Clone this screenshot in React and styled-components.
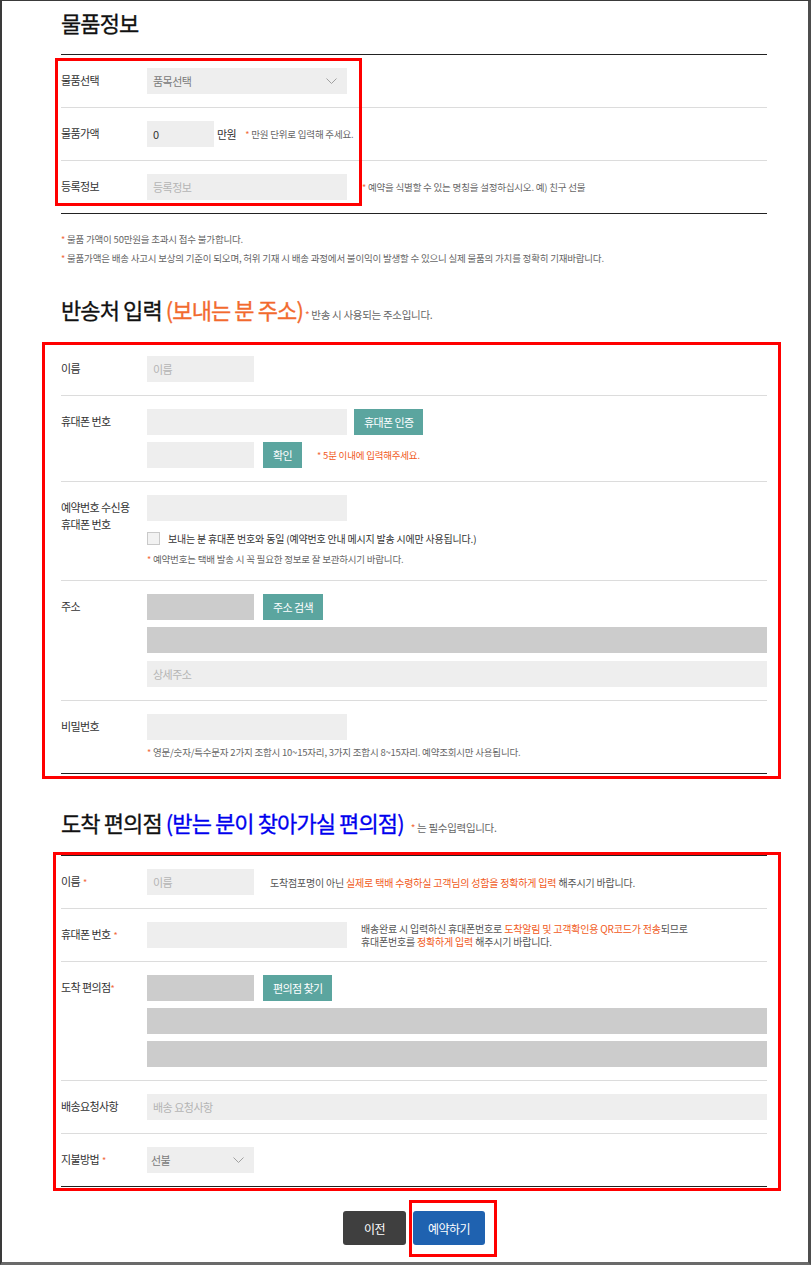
import React from 'react';
import styled, { createGlobalStyle } from 'styled-components';

const FONT = `"Noto Sans CJK KR", "Noto Sans", sans-serif`;

const GlobalStyle = createGlobalStyle`
  html, body { margin: 0; padding: 0; background: #fff; }
  body { font-family: ${FONT}; color: #222; }
  *, *::before, *::after { box-sizing: border-box; }
`;

const Frame = styled.div`
  width: 811px;
  height: 1265px;
  border-top: 1px solid #3a3a3a;
  border-left: 2px solid #3a3a3a;
  border-right: 3px solid #4d4d4d;
  border-bottom: 3px solid #6a6a6a;
  padding: 0 41px 0 59px;
  overflow: hidden;
`;

const Title = styled.h2`
  margin: ${(p) => p.$mt}px 0 ${(p) => p.$mb ?? 16}px;
  height: 28px;
  display: flex;
  align-items: baseline;
  font-size: 22px;
  font-weight: 400;
  letter-spacing: -0.9px;
  line-height: 28px;
  color: #111;
  white-space: pre;
  -webkit-text-stroke: 0.3px #111;
`;

const Accent = styled.span`
  color: ${(p) => p.$color};
  -webkit-text-stroke: 0.3px ${(p) => p.$color};
`;

const TitleNote = styled.span`
  margin-left: ${(p) => p.$ml ?? 2}px;
  font-size: 10.5px;
  font-weight: 400;
  line-height: 14px;
  letter-spacing: -0.3px;
  color: #666;
  -webkit-text-stroke: 0;
`;

const Star = styled.span`
  color: #f26a3a;
  font-size: ${(p) => p.$size ?? 9}px;
  margin-right: ${(p) => p.$mr ?? 2}px;
  margin-left: ${(p) => p.$ml ?? 0}px;
  -webkit-text-stroke: 0;
`;

const Table = styled.div`
  position: relative;
  border-top: 1px solid #222;
  border-bottom: 1px solid #222;
`;

const Row = styled.div`
  display: grid;
  grid-template-columns: 86px 1fr;
  padding: 13px 0;
  & + & {
    border-top: 1px solid #dcdcdc;
  }
`;

const Label = styled.div`
  font-size: 11px;
  letter-spacing: -0.6px;
  line-height: 17px;
  padding-top: 4px;
  color: #333;
`;

const Field = styled.div`
  display: flex;
  flex-direction: column;
  align-items: stretch;
  gap: ${(p) => p.$gap ?? 7}px;
`;

const Line = styled.div`
  display: flex;
  align-items: center;
  min-height: ${(p) => p.$h ?? 26}px;
  margin-top: ${(p) => p.$mt ?? 0}px;
`;

const Input = styled.input`
  width: ${(p) => (p.$w ? `${p.$w}px` : '100%')};
  height: 26px;
  flex: none;
  border: 0;
  margin: 0;
  background: #eeeeee;
  padding: 0 6px;
  font-family: ${FONT};
  font-size: 11px;
  letter-spacing: -0.5px;
  color: #333;
  outline: none;
  &::placeholder {
    color: #b4b4b4;
  }
`;

const GrayBar = styled.div`
  width: ${(p) => (p.$w ? `${p.$w}px` : '100%')};
  height: 26px;
  flex: none;
  background: #cccccc;
`;

const TealButton = styled.button`
  height: 26px;
  margin: 0 0 0 ${(p) => p.$ml ?? 7}px;
  padding: 0 ${(p) => p.$px ?? 10}px;
  border: 0;
  background: #5ba59f;
  color: #fff;
  font-family: ${FONT};
  font-size: 11px;
  letter-spacing: -0.6px;
  cursor: pointer;
`;

const Unit = styled.span`
  margin-left: 3px;
  font-size: 11px;
  letter-spacing: -0.5px;
  color: #333;
`;

const Hint = styled.span`
  margin-left: ${(p) => p.$ml ?? 0}px;
  font-size: 9.5px;
  letter-spacing: -0.2px;
  line-height: 14px;
  color: ${(p) => p.$color ?? '#666'};
  white-space: nowrap;
`;

const SideNote = styled.p`
  margin: 0 0 0 ${(p) => p.$ml}px;
  font-size: 10px;
  letter-spacing: -0.2px;
  line-height: 13px;
  color: #555;
  white-space: nowrap;
`;

const Orange = styled.span`
  color: #f15a22;
`;

const SelectBox = styled.div`
  width: ${(p) => p.$w}px;
  height: 26px;
  background: #eeeeee;
  display: flex;
  align-items: center;
  justify-content: space-between;
  padding: 0 10px 0 ${(p) => p.$pl ?? 6}px;
  font-size: 11px;
  letter-spacing: -0.5px;
  color: #7a7a7a;
`;

const Chevron = () => (
  <svg width="11" height="7" viewBox="0 0 11 7" fill="none">
    <polyline points="0.5,0.5 5.5,5.5 10.5,0.5" stroke="#a0a0a0" strokeWidth="1" />
  </svg>
);

const CheckBox = styled.span`
  width: 13px;
  height: 13px;
  flex: none;
  border: 1px solid #c9c9c9;
  background: #f2f2f2;
  margin-right: 8px;
`;

const CheckText = styled.span`
  font-size: 10px;
  letter-spacing: -0.2px;
  color: #333;
  white-space: nowrap;
`;

const Notes = styled.div`
  margin-top: 16px;
  display: flex;
  flex-direction: column;
`;

const NoteLine = styled.div`
  font-size: 9.5px;
  letter-spacing: -0.2px;
  line-height: 18px;
  color: #666;
  white-space: nowrap;
`;

const RedBox = styled.div`
  position: absolute;
  border: 3px solid #ff0000;
  pointer-events: none;
  top: ${(p) => p.$top}px;
  left: ${(p) => p.$left}px;
  ${(p) => (p.$width != null ? `width: ${p.$width}px;` : `right: ${p.$right}px;`)}
  ${(p) => (p.$height != null ? `height: ${p.$height}px;` : `bottom: ${p.$bottom}px;`)}
`;

const ButtonBar = styled.div`
  margin-top: 24px;
  display: flex;
  justify-content: center;
  gap: 7px;
`;

const ActionButton = styled.button`
  width: ${(p) => p.$w}px;
  height: 34px;
  border: 0;
  border-radius: 3px;
  background: ${(p) => p.$bg};
  color: #fff;
  font-family: ${FONT};
  font-size: 12px;
  letter-spacing: -0.5px;
  cursor: pointer;
`;

const Highlight = styled.span`
  position: relative;
  display: inline-flex;
`;

export default function App() {
  return (
    <>
      <GlobalStyle />
      <Frame>
        <Title $mt={7} $mb={18}>물품정보</Title>
        <Table>
          <Row>
            <Label>물품선택</Label>
            <Field>
              <Line>
                <SelectBox $w={200}>
                  <span>품목선택</span>
                  <Chevron />
                </SelectBox>
              </Line>
            </Field>
          </Row>
          <Row>
            <Label>물품가액</Label>
            <Field>
              <Line>
                <Input $w={67} defaultValue="0" />
                <Unit>만원</Unit>
                <Hint $ml={9}>
                  <Star>*</Star>만원 단위로 입력해 주세요.
                </Hint>
              </Line>
            </Field>
          </Row>
          <Row>
            <Label>등록정보</Label>
            <Field>
              <Line>
                <Input $w={200} placeholder="등록정보" />
                <Hint $ml={15}>
                  <Star>*</Star>예약을 식별할 수 있는 명칭을 설정하십시오. 예) 친구 선물
                </Hint>
              </Line>
            </Field>
          </Row>
          <RedBox $top={3} $left={-6} $width={307} $height={148} />
        </Table>
        <Notes>
          <NoteLine>
            <Star>*</Star>물품 가액이 50만원을 초과시 접수 불가합니다.
          </NoteLine>
          <NoteLine>
            <Star>*</Star>물품가액은 배송 사고시 보상의 기준이 되오며, 허위 기재 시 배송 과정에서 불이익이 발생할 수 있으니 실제 물품의 가치를 정확히 기재바랍니다.
          </NoteLine>
        </Notes>

        <Title $mt={27} $mb={19}>
          반송처 입력 <Accent $color="#f26a2e">(보내는 분 주소)</Accent>
          <TitleNote>
            <Star $size={10}>*</Star>반송 시 사용되는 주소입니다.
          </TitleNote>
        </Title>
        <Table>
          <Row>
            <Label>이름</Label>
            <Field>
              <Line>
                <Input $w={107} placeholder="이름" />
              </Line>
            </Field>
          </Row>
          <Row>
            <Label>휴대폰 번호</Label>
            <Field>
              <Line>
                <Input $w={200} />
                <TealButton>휴대폰 인증</TealButton>
              </Line>
              <Line>
                <Input $w={107} />
                <TealButton $ml={9}>확인</TealButton>
                <Hint $ml={15} $color="#f15a22">
                  <Star>*</Star>5분 이내에 입력해주세요.
                </Hint>
              </Line>
            </Field>
          </Row>
          <Row>
            <Label>
              예약번호 수신용
              <br />
              휴대폰 번호
            </Label>
            <Field $gap={0}>
              <Line>
                <Input $w={200} />
              </Line>
              <Line $h={20} $mt={7}>
                <CheckBox />
                <CheckText>보내는 분 휴대폰 번호와 동일 (예약번호 안내 메시지 발송 시에만 사용됩니다.)</CheckText>
              </Line>
              <Line $h={14} $mt={4}>
                <Hint>
                  <Star>*</Star>예약번호는 택배 발송 시 꼭 필요한 정보로 잘 보관하시기 바랍니다.
                </Hint>
              </Line>
            </Field>
          </Row>
          <Row>
            <Label>주소</Label>
            <Field>
              <Line>
                <GrayBar $w={107} />
                <TealButton $ml={9}>주소 검색</TealButton>
              </Line>
              <GrayBar />
              <Line $mt={1}>
                <Input placeholder="상세주소" />
              </Line>
            </Field>
          </Row>
          <Row>
            <Label>비밀번호</Label>
            <Field $gap={0}>
              <Line>
                <Input $w={200} />
              </Line>
              <Line $h={14} $mt={5}>
                <Hint>
                  <Star>*</Star>영문/숫자/특수문자 2가지 조합시 10~15자리, 3가지 조합시 8~15자리. 예약조회시만 사용됩니다.
                </Hint>
              </Line>
            </Field>
          </Row>
          <RedBox $top={-1} $left={-19} $right={-14} $bottom={-6} />
        </Table>

        <Title $mt={34} $mb={19}>
          도착 편의점 <Accent $color="#0000ee">(받는 분이 찾아가실 편의점)</Accent>
          <TitleNote $ml={7}>
            <Star $size={10}>*</Star>는 필수입력입니다.
          </TitleNote>
        </Title>
        <Table>
          <Row>
            <Label>
              이름<Star $ml={3}>*</Star>
            </Label>
            <Field>
              <Line>
                <Input $w={107} placeholder="이름" />
                <SideNote $ml={16}>
                  도착점포명이 아닌 <Orange>실제로 택배 수령하실 고객님의 성함을 정확하게 입력</Orange> 해주시기 바랍니다.
                </SideNote>
              </Line>
            </Field>
          </Row>
          <Row>
            <Label>
              휴대폰 번호<Star $ml={3}>*</Star>
            </Label>
            <Field>
              <Line>
                <Input $w={200} />
                <SideNote $ml={14}>
                  배송완료 시 입력하신 휴대폰번호로 <Orange>도착알림 및 고객확인용 QR코드가 전송</Orange>되므로
                  <br />
                  휴대폰번호를 <Orange>정확하게 입력</Orange> 해주시기 바랍니다.
                </SideNote>
              </Line>
            </Field>
          </Row>
          <Row>
            <Label>
              도착 편의점<Star $mr={0}>*</Star>
            </Label>
            <Field>
              <Line>
                <GrayBar $w={107} />
                <TealButton $ml={9}>편의점 찾기</TealButton>
              </Line>
              <GrayBar />
              <GrayBar />
            </Field>
          </Row>
          <Row>
            <Label>배송요청사항</Label>
            <Field>
              <Line>
                <Input placeholder="배송 요청사항" />
              </Line>
            </Field>
          </Row>
          <Row>
            <Label>
              지불방법<Star $ml={3}>*</Star>
            </Label>
            <Field>
              <Line>
                <SelectBox $w={107} $pl={4}>
                  <span>선불</span>
                  <Chevron />
                </SelectBox>
              </Line>
            </Field>
          </Row>
          <RedBox $top={-4} $left={-8} $right={-14} $bottom={-5} />
        </Table>

        <ButtonBar>
          <ActionButton $w={63} $bg="#3f3f3f">이전</ActionButton>
          <Highlight>
            <ActionButton $w={72} $bg="#1f62b0">예약하기</ActionButton>
            <RedBox $top={-11} $left={-4} $right={-12} $bottom={-12} />
          </Highlight>
        </ButtonBar>
      </Frame>
    </>
  );
}
